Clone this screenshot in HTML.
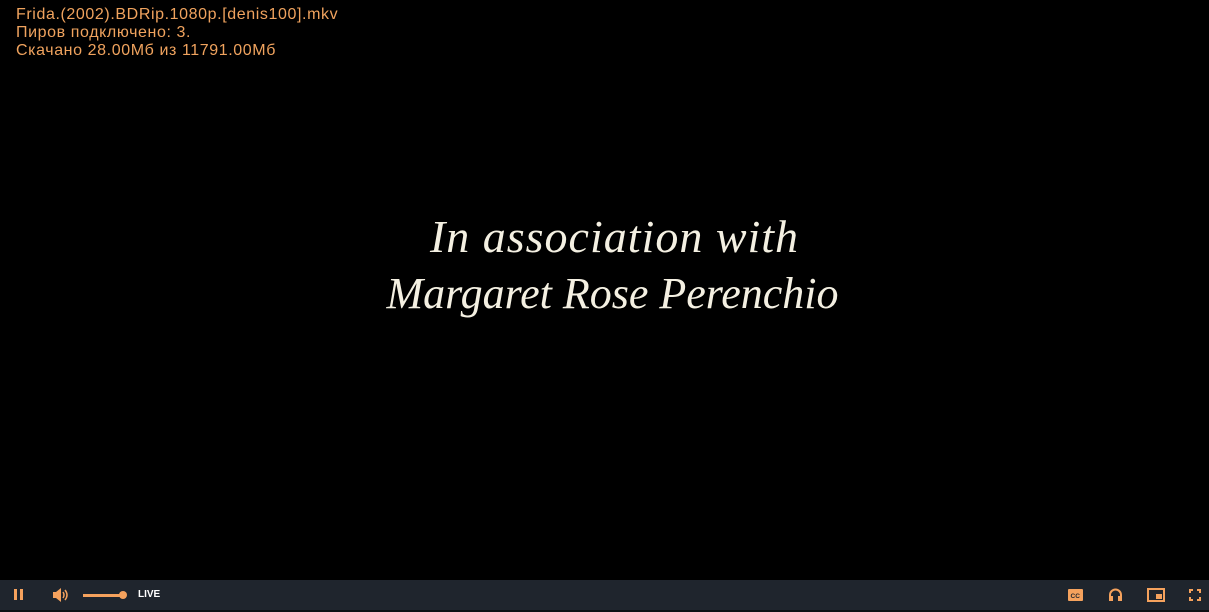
<!DOCTYPE html>
<html><head><meta charset="utf-8"><style>
html,body{margin:0;padding:0;width:1209px;height:612px;background:#000;overflow:hidden;font-family:"Liberation Sans","DejaVu Sans",sans-serif}
.info{position:absolute;left:16px;top:6px;color:#f0a35e;font-size:16px;letter-spacing:0.6px;line-height:18px}
.t{position:absolute;left:0;width:1209px;text-align:center;color:#f4f0e2;font-family:"Liberation Serif",serif;font-style:italic;font-size:46px;letter-spacing:1px}
.bar{position:absolute;left:0;top:580px;width:1209px;height:30px;background:#1f252d}
.bot{position:absolute;left:0;top:610px;width:1209px;height:2px;background:#0d1014}
.o{position:absolute;fill:#f5a25d}
</style></head><body>
<div class="info">Frida.(2002).BDRip.1080p.[denis100].mkv<br>Пиров подключено: 3.<br>Скачано 28.00Мб из 11791.00Мб</div>
<div class="t" style="top:210px;left:10px">In association with</div>
<div class="t" style="top:268px;font-size:44px;letter-spacing:0;left:8px">Margaret Rose Perenchio</div>
<div class="bar">
<svg class="o" style="left:13px;top:8px" width="12" height="14"><rect x="1" y="1" width="3" height="11"/><rect x="7" y="1" width="3" height="11"/></svg>
<svg class="o" style="left:52px;top:8px" width="16" height="14"><path d="M1 4h3l5-4v14l-5-4H1z"/><path d="M11 4q2 3 0 6M13 2q4 5 0 10" stroke="#f5a25d" stroke-width="1.5" fill="none"/></svg>
<div style="position:absolute;left:83px;top:14px;width:40px;height:3px;background:#f5a25d"></div>
<div style="position:absolute;left:119px;top:11px;width:8px;height:8px;border-radius:50%;background:#f5a25d"></div>
<div style="position:absolute;left:138px;top:9px;color:#fff;font-size:10px;font-weight:bold">LIVE</div>
<svg class="o" style="left:1068px;top:9px" width="15" height="12"><rect width="15" height="12" rx="1"/><text x="2.5" y="9" font-size="6.5" font-weight="bold" fill="#1f252d" font-family="Liberation Sans">CC</text></svg>
<svg style="position:absolute;left:1108px;top:7px" width="15" height="15"><path d="M2 12V8a5.5 5.5 0 0 1 11 0v4" stroke="#f5a25d" stroke-width="2" fill="none"/><rect x="1" y="9" width="4" height="5" fill="#f5a25d"/><rect x="10" y="9" width="4" height="5" fill="#f5a25d"/></svg>
<svg style="position:absolute;left:1147px;top:8px" width="18" height="14"><rect x="1" y="1" width="16" height="12" stroke="#f5a25d" stroke-width="2" fill="none"/><rect x="9" y="6" width="6" height="5" fill="#f5a25d"/></svg>
<svg style="position:absolute;left:1189px;top:9px" width="12" height="12" fill="none" stroke="#f5a25d" stroke-width="2"><path d="M1 4V1h3M8 1h3v3M11 8v3H8M4 11H1V8"/></svg>
</div>
<div class="bot"></div>
</body></html>
